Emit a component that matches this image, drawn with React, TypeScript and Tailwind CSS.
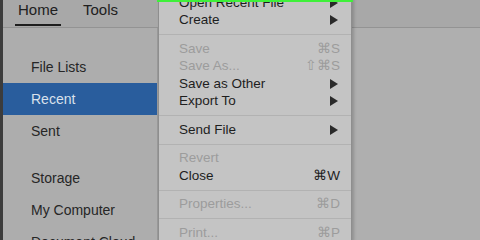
import { Fragment } from "react";

type MenuRow =
  | { sep: true }
  | { label: string; disabled?: boolean; shortcut?: string; sub?: boolean; sep?: false };

const menu: MenuRow[] = [
  { label: "Open Recent File", sub: true },
  { label: "Create", sub: true },
  { sep: true },
  { label: "Save", disabled: true, shortcut: "⌘S" },
  { label: "Save As...", disabled: true, shortcut: "⇧⌘S" },
  { label: "Save as Other", sub: true },
  { label: "Export To", sub: true },
  { sep: true },
  { label: "Send File", sub: true },
  { sep: true },
  { label: "Revert", disabled: true },
  { label: "Close", shortcut: "⌘W" },
  { sep: true },
  { label: "Properties...", disabled: true, shortcut: "⌘D" },
  { sep: true },
  { label: "Print...", disabled: true, shortcut: "⌘P" },
];

function Arrow() {
  return (
    <svg width="8" height="10" viewBox="0 0 8 10" className="mr-[2px]">
      <path d="M0 0 L8 5 L0 10 Z" fill="#2a2a2a" />
    </svg>
  );
}

function SideItem({ label, active }: { label: string; active?: boolean }) {
  return (
    <div
      className={
        "flex h-[32px] items-center pl-[28px] text-[14px] " +
        (active ? "bg-[#295d9d] text-[#d9e1ec]" : "text-[#262626]")
      }
    >
      {label}
    </div>
  );
}

export default function App() {
  return (
    <div
      className="relative flex h-[240px] w-[480px] overflow-hidden bg-[#aeaeae]"
      style={{ fontFamily: '"Liberation Sans", Arial, sans-serif' }}
    >
      <div className="w-[3px] shrink-0 bg-[#3c3c3c]" />

      <div className="flex min-w-0 flex-1 flex-col">
        {/* tab bar */}
        <div className="flex h-[28px] shrink-0 items-start border-b border-[#939393] bg-[#a8a8a8] text-[15px] leading-[20px] text-[#202020]">
          <div className="relative ml-[12px] h-full px-[3px]">
            Home
            <div className="absolute bottom-[1px] left-0 right-0 h-[2px] bg-[#1e1e1e]" />
          </div>
          <div className="ml-[22px]">Tools</div>
        </div>

        <div className="flex flex-1">
          {/* sidebar */}
          <div className="w-[155px] shrink-0 border-r border-[#9a9a9a] bg-[#adadad] pt-[23px]">
            <SideItem label="File Lists" />
            <SideItem label="Recent" active />
            <SideItem label="Sent" />
            <div className="h-[15px]" />
            <SideItem label="Storage" />
            <SideItem label="My Computer" />
            <SideItem label="Document Cloud" />
          </div>
          <div className="flex-1 bg-[#afafaf]" />
        </div>
      </div>

      {/* dropdown menu */}
      <div className="absolute left-[158px] top-[-6px] w-[194px] border-x border-[#8e8e8e] bg-[#c4c4c4] text-[13.5px] shadow-[2px_0_3px_rgba(0,0,0,0.18)]">
        {menu.map((row, i) =>
          row.sep ? (
            <div key={i} className="flex h-[11px] items-center">
              <div className="h-[1px] w-full bg-[#b2b2b2]" />
            </div>
          ) : (
            <Fragment key={i}>
              <div
                className={
                  "flex h-[17.5px] items-center justify-between pl-[20px] pr-[11px] " +
                  (row.disabled ? "text-[#9c9c9c]" : "text-[#1e1e1e]")
                }
              >
                <span>{row.label}</span>
                {row.sub ? <Arrow /> : row.shortcut ? <span>{row.shortcut}</span> : null}
              </div>
            </Fragment>
          )
        )}
      </div>

      <div className="absolute left-[157px] top-0 h-[2px] w-[196px] bg-[#3ff03a]" />
    </div>
  );
}
